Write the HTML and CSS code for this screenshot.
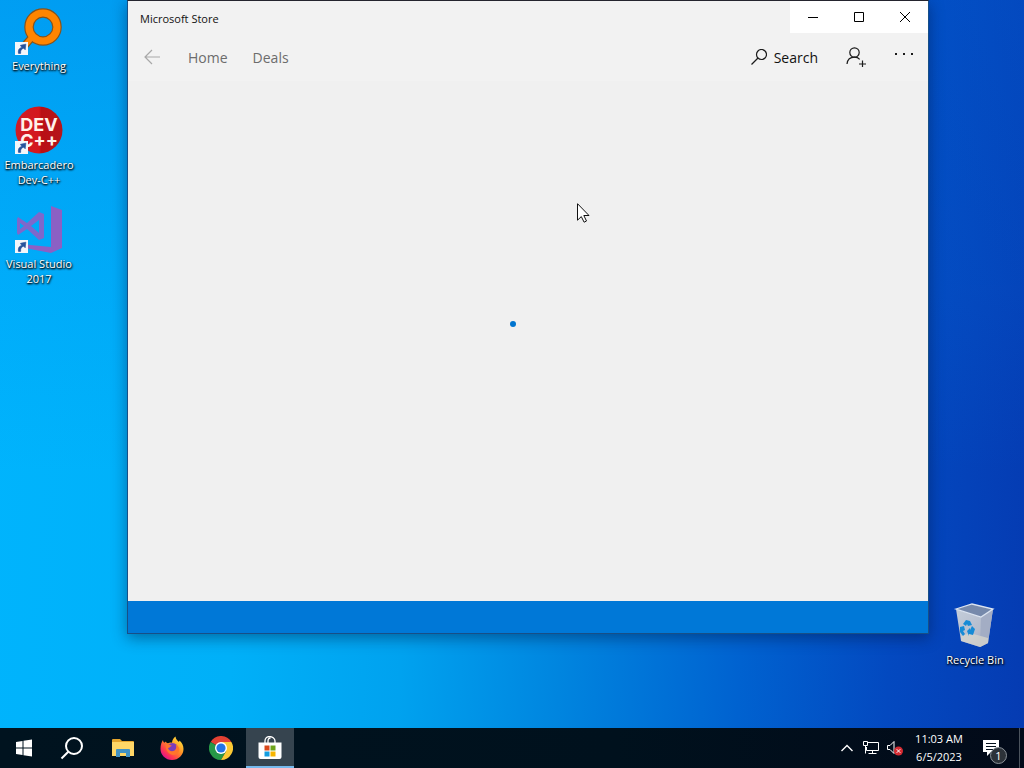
FILE: index.html
```html
<!DOCTYPE html>
<html lang="en">
<head>
<meta charset="utf-8">
<title>Desktop</title>
<link rel="stylesheet" href="styles.css">
</head>
<body>
<svg class="defs" aria-hidden="true">
  <defs>
    <symbol id="shortcut" viewBox="0 0 12 12">
      <rect width="12" height="12" fill="#f4f6fa"/>
      <path d="M3.2 10.5C2.600 7.300 4 5.400 6.300 5L5 3.100l5-1.100-.6 5.200-1.400-1.500C5.800 6.300 5 7.800 5.200 10.500z" fill="#27539c" stroke="#27539c" stroke-width=".6"/>
    </symbol>
  </defs>
</svg>
<div class="screen">
  <main class="desktop">
    <a class="icon icon-everything" href="#">
      <svg class="art" viewBox="0 0 48 48" aria-hidden="true">
        <path d="M18 29L5 44" stroke="#84521c" stroke-width="8"/>
        <circle cx="28" cy="20" r="14" fill="none" stroke="#84521c" stroke-width="9.500"/>
        <path d="M19 28L5 44" stroke="#ff8500" stroke-width="5.500"/>
        <circle cx="28" cy="20" r="14" fill="none" stroke="#ff8500" stroke-width="7.200"/>
        <use href="#shortcut" x="0" y="35" width="13" height="13"/>
      </svg>
      <span>Everything</span>
    </a>
    <a class="icon icon-dev" href="#">
      <svg class="art" viewBox="0 0 48 48" aria-hidden="true">
        <defs><linearGradient id="red" x1="0" y1="0" x2="1" y2="0"><stop offset="0" stop-color="#cf1d26"/><stop offset=".5" stop-color="#d4171e"/><stop offset=".55" stop-color="#b90f14"/><stop offset="1" stop-color="#b5161c"/></linearGradient></defs>
        <circle cx="24" cy="24" r="23.500" fill="url(#red)"/>
        <text class="dev-text"><tspan x="24" y="25">DEV</tspan><tspan x="24" y="41">C++</tspan></text>
        <use href="#shortcut" x="0" y="35" width="13" height="13"/>
      </svg>
      <span>Embarcadero<br>Dev-C++</span>
    </a>
    <a class="icon icon-vs" href="#">
      <svg class="art" viewBox="0 0 48 48" aria-hidden="true">
        <path d="M36 1l11 4v38l-11 5L5 42v-3l31 3z" fill="#8b60c4"/>
        <path d="M3 12l9 6 12-11 5 2v24l-5 2-12-11-9 6-1-2V14zM5 18v6l4-3zM24 15l-8 6 8 7z" fill="#7e68cb" fill-rule="evenodd"/>
        <use href="#shortcut" x="0" y="35" width="13" height="13"/>
      </svg>
      <span>Visual Studio<br>2017</span>
    </a>
    <a class="icon icon-bin" href="#">
      <svg class="art" viewBox="0 0 48 48" aria-hidden="true">
        <defs><linearGradient id="bin" x1="0" y1="0" x2="1" y2="1"><stop offset="0" stop-color="#c4cdda"/><stop offset=".6" stop-color="#b4bccd"/><stop offset="1" stop-color="#8f99b5"/></linearGradient></defs>
        <path d="M5 8l25 8 12-8-5 34-8 4-19-6z" fill="url(#bin)"/>
        <path d="M30 16l12-8-5 34-8 4z" fill="#a3adc4"/>
        <path d="M5 8l16-5 21 5-12 8z" fill="#7689ab" stroke="#dce4f0" stroke-width="1.300"/>
        <path d="M10 35l9-3 18 5v5l-8 4-19-6z" fill="#dad8ce" opacity=".7"/>
        <path d="M12 23l3-4 4 1 2 4-4 1-1-2-1 2zM9 26l4-1 1 4-2 1 2 3-2 2-3-4zM16 30l3-3v2l2-4 3 3-2 6-4-1v2z" fill="#168bd6"/>
      </svg>
      <span>Recycle Bin</span>
    </a>

    <section class="window" aria-label="Microsoft Store">
      <header class="titlebar">
        <h1 class="title">Microsoft Store</h1>
        <div class="controls">
          <button class="control" aria-label="Minimize"><svg viewBox="0 0 12 12"><path d="M1 6.500h10"/></svg></button>
          <button class="control" aria-label="Maximize"><svg viewBox="0 0 12 12"><path d="M1.500 1.500h9v9h-9z"/></svg></button>
          <button class="control" aria-label="Close"><svg viewBox="0 0 12 12"><path d="M1 1l10 10M11 1L1 11"/></svg></button>
        </div>
      </header>
      <nav class="nav">
        <button class="back" aria-label="Back" disabled><svg viewBox="0 0 16 16"><path d="M16 8H1M8 1L1 8l7 7"/></svg></button>
        <a class="tab" href="#">Home</a>
        <a class="tab" href="#">Deals</a>
        <button class="search"><svg viewBox="0 0 16 16" aria-hidden="true"><circle cx="10.500" cy="5.500" r="5"/><path d="M7 9L.5 15.500"/></svg>Search</button>
        <button class="tool" aria-label="Sign in"><svg viewBox="0 0 20 20"><circle cx="8.500" cy="5.500" r="4.700"/><path d="M1 17c.5-4.500 3.500-6.800 7.500-6.800 2.300 0 4 .8 5.200 2.200M16.500 13.500v7M13 17h7"/></svg></button>
        <button class="tool more" aria-label="More"><svg viewBox="0 0 20 20"><path d="M1 7h2M9 7h2M17 7h2"/></svg></button>
      </nav>
      <div class="content" role="status" aria-label="Loading"><i class="dot"></i></div>
      <footer class="strip"></footer>
    </section>
    <svg class="pointer" viewBox="0 0 13 20" aria-hidden="true"><path d="M.5.700v16.500l3.800-3.600 2.800 5.600 2.400-1.200-2.700-5.500h5.200z" fill="#fff" stroke="#111"/></svg>
  </main>

  <footer class="taskbar">
    <button class="task" aria-label="Start"><svg viewBox="0 0 24 24"><path d="M4 6l6.500-1v6.500H4zM11.500 4.800L20 3.500v8h-8.500zM4 12.500h6.500V19L4 18zM11.500 12.500H20v8l-8.500-1.300z" fill="#fff"/></svg></button>
    <button class="task" aria-label="Search"><svg viewBox="0 0 24 24" fill="none" stroke="#fff" stroke-width="2"><circle cx="14" cy="10" r="8"/><path d="M8.300 15.700L1.500 22.500"/></svg></button>
    <div class="apps">
      <button class="task" aria-label="File Explorer"><svg viewBox="0 0 24 24"><path d="M1 4q0-1 1-1h7l2 2h11q1 0 1 1v14H1z" fill="#e5a52d"/><path d="M1 6h22v14H1z" fill="#ffd767"/><path d="M5 21v-7q0-1 1-1h12q1 0 1 1v7h-4v-4H9v4z" fill="#4192c4"/></svg></button>
      <button class="task" aria-label="Firefox"><svg viewBox="0 0 24 24">
        <defs><linearGradient id="fox" x1=".9" y1=".1" x2=".2" y2=".9"><stop offset="0" stop-color="#ffe53b"/><stop offset=".45" stop-color="#ff8c25"/><stop offset=".8" stop-color="#ff3750"/><stop offset="1" stop-color="#e31587"/></linearGradient></defs>
        <path d="M3 4c0 1 .5 2 1.200 2.700L6 5.500c.2 1 .8 1.500 2 1.700 1.500-.7 2.500-.8 4-.5.300-2.700 1.300-4.700 3.500-6.200.3 3 2 4 3.500 5.500l.5-1.500c2.500 2 4 5 4 8.500C23.500 19 18.500 24 12 24S.5 19 .5 13C.5 9 1.500 6 3 4z" fill="url(#fox)"/>
        <circle cx="12.500" cy="12.500" r="5.500" fill="#7a3bbd"/>
        <path d="M5.500 9c3-1 5 0 6.500 1-2 0-2 2-4 2 .5 3 4 4 6.500 2.500 2-1.200 2.200-4 1-6 4 2 5 5 2.500 8.500-4 4-12 2-12.500-8z" fill="#ff752b"/></svg></button>
      <button class="task" aria-label="Chrome"><svg viewBox="0 0 24 24"><path d="M1.600 6A12 12 0 0 1 22.400 6H12v6z" fill="#e34133"/><path d="M1.600 6A12 12 0 0 0 12 24l5.200-9L12 12z" fill="#279847"/><path d="M22.400 6H12l5.200 9L12 24A12 12 0 0 0 22.400 6z" fill="#fcc934"/><circle cx="12" cy="12" r="6" fill="#fff"/><circle cx="12" cy="12" r="4.600" fill="#2474e5"/></svg></button>
      <button class="task active" aria-label="Microsoft Store"><svg viewBox="0 0 24 24"><path d="M7 8V5c0-2.500 2-4.500 4.500-4.500S17 2.500 17 5v3M10 8V5c0-2 1-3 2.500-3" fill="none" stroke="#fff" stroke-width="1.300"/><path d="M.5 6.500h23V21q0 2-2 2h-19q-2 0-2-2z" fill="#fff"/><path d="M6.500 9.500h5v5h-5z" fill="#d9481c"/><path d="M12.500 9.500h5v5h-5z" fill="#6da41c"/><path d="M6.500 15.500h5v5h-5z" fill="#139de0"/><path d="M12.500 15.500h5v5h-5z" fill="#f7b500"/></svg></button>
    </div>
    <div class="tray">
      <button class="tray-button" aria-label="Show hidden icons"><svg viewBox="0 0 16 16"><path d="M2.500 11L8 5.500l5.500 5.500" stroke-width="1.400"/></svg></button>
      <button class="tray-button" aria-label="Network"><svg viewBox="0 0 16 16"><path d="M5 2.500h10.500v8H3.500V7M.5 1.500h4v4h-4zM2.500 5.500v8M9.500 10.500v3M5.500 13.500h8"/></svg></button>
      <button class="tray-button" aria-label="Volume muted"><svg viewBox="0 0 16 16"><path d="M.5 5.500H3l4-4v12l-4-4H.5z"/><circle cx="11.500" cy="11" r="4.500" fill="#d52b32" stroke="none"/><path d="M9.700 9.200l3.600 3.600M13.300 9.200l-3.600 3.600"/></svg></button>
      <button class="clock"><time datetime="2023-06-05T11:03">11:03 AM<br>6/5/2023</time></button>
      <button class="notify" aria-label="Notifications, 1 new"><svg viewBox="0 0 18 18" aria-hidden="true"><path d="M1 1h16v12H9l-4 4v-4H1z" fill="#fff"/><path d="M4 4.500h10M4 7.500h10M4 10.500h7" stroke="#04101c"/></svg><span class="badge">1</span></button>
      <button class="peek" aria-label="Show desktop"></button>
    </div>
  </footer>
</div>
</body>
</html>
```

FILE: styles.css
```css
* { box-sizing: border-box; }

body {
  margin: 0;
  font-family: "Open Sans", "Noto Sans", sans-serif;
  font-size: 11px;
}

button {
  border: 0;
  padding: 0;
  background: none;
  color: inherit;
  font: inherit;
}

a { color: inherit; text-decoration: none; }
svg { display: block; }
.defs { position: absolute; width: 0; height: 0; }

.screen {
  display: flex;
  flex-direction: column;
  height: 100vh;
  overflow: hidden;
}

.desktop {
  position: relative;
  flex: 1;
  background:
    linear-gradient(180deg, rgba(0, 100, 215, 0.28) 0, rgba(0, 120, 230, 0.12) 40%, transparent 65%),
    linear-gradient(93deg, #00b4fd 0, #00b0f8 25%, #00a2ef 41%, #0085df 56%, #0062d0 73%, #0349c0 87%, #053bb2 100%);
}

/* Desktop shortcuts */
.icon {
  position: absolute;
  display: flex;
  flex-direction: column;
  align-items: center;
  gap: 3px;
  width: 78px;
  color: #fff;
  line-height: 15px;
  text-align: center;
  text-shadow: 0 1px 2px #000, 1px 1px 2px #000;
  white-space: nowrap;
}
.icon-everything { left: 0; top: 7px; }
.icon-dev { left: 0; top: 106px; }
.icon-vs { left: 0; top: 205px; }
.icon-bin { right: 10px; top: 601px; }
.art { width: 48px; height: 48px; }
.dev-text {
  fill: #fff2ea;
  font-family: Inter, sans-serif;
  font-size: 18px;
  font-weight: 700;
  text-anchor: middle;
  text-shadow: none;
}

/* Store window */
.window {
  position: absolute;
  left: 127px;
  right: 95px;
  top: 0;
  bottom: 94px;
  display: flex;
  flex-direction: column;
  border: 1px solid #174f87;
  border-top-color: #24242e;
  background: #f0f0f0;
  background-clip: padding-box;
  box-shadow: 0 4px 14px rgba(0, 20, 60, 0.45);
  color: #111;
}
.titlebar {
  display: flex;
  justify-content: space-between;
  height: 32px;
  background: #f2f2f2;
}
.title {
  margin: 0;
  padding-left: 12px;
  font-size: 11px;
  font-weight: 400;
  line-height: 35px;
}
.controls { display: flex; background: #fff; }
.control {
  display: grid;
  place-items: center;
  width: 46px;
}
.control svg { width: 12px; height: 12px; fill: none; stroke: #000; }

.nav {
  display: flex;
  align-items: center;
  height: 48px;
  padding: 0 14px 0 16px;
  background: #f2f2f2;
  font-size: 14px;
}
.nav svg { fill: none; stroke: #1b1b1b; stroke-width: 1.2; }
.nav .back svg { width: 16px; height: 16px; stroke: #a8a8a8; }
.back { margin-right: 28px; }
.tab { margin-right: 25px; color: #6c6c6c; }
.search {
  display: flex;
  align-items: center;
  gap: 7px;
  margin-left: auto;
}
.search svg { width: 16px; height: 16px; }
.tool { margin-left: 28px; }
.tool svg { width: 20px; height: 20px; }
.nav .more svg { stroke-width: 2; }

.content {
  display: grid;
  flex: 1;
  place-items: center;
  padding: 0 30px 35px 0;
}
.dot {
  width: 6px;
  height: 6px;
  border-radius: 50%;
  background: #0074cf;
}
.strip { height: 32px; background: #0078d7; }

.pointer { position: absolute; left: 577px; top: 203px; width: 13px; height: 20px; }

/* Taskbar */
.taskbar {
  display: flex;
  height: 40px;
  background: linear-gradient(90deg, #00131f, #00111d 60%, #020a19);
  color: #fff;
}
.task {
  display: grid;
  place-items: center;
  width: 48px;
  height: 40px;
}
.task svg { width: 24px; height: 24px; }
.apps { display: flex; gap: 1px; margin-left: 3px; }
.active { background: #36444f; box-shadow: inset 0 -2px #76b9ed; }

.tray { display: flex; align-items: center; margin-left: auto; }
.tray-button { display: grid; place-items: center; width: 24px; height: 40px; }
.tray-button svg { width: 16px; height: 16px; fill: none; stroke: #fff; }
.clock { width: 64px; line-height: 18px; text-align: center; white-space: nowrap; }
.notify {
  position: relative;
  display: grid;
  place-items: center;
  width: 48px;
  height: 40px;
  padding-right: 8px;
}
.notify svg { width: 18px; height: 18px; }
.badge {
  position: absolute;
  right: 12px;
  bottom: 4px;
  width: 17px;
  height: 17px;
  border: 1px solid #8b9299;
  border-radius: 50%;
  background: #2c3239;
  line-height: 15px;
  text-align: center;
}
.peek { width: 5px; height: 40px; border-left: 1px solid #4b535d; }
```
